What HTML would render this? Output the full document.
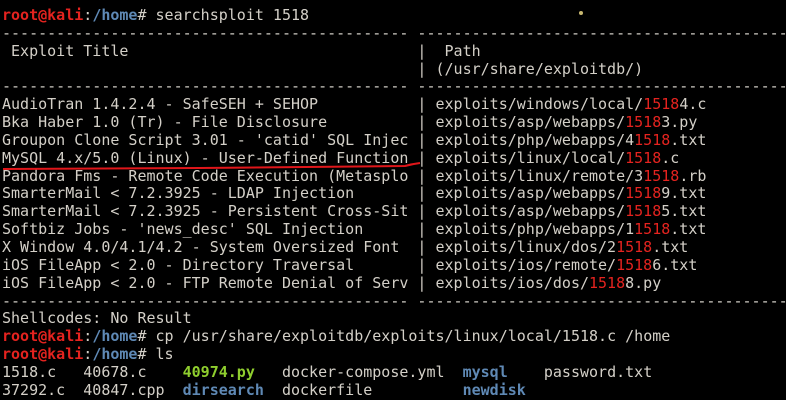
<!DOCTYPE html>
<html><head><meta charset="utf-8"><style>
html,body{margin:0;padding:0;background:#000;width:786px;height:400px;overflow:hidden}
pre{position:absolute;left:2px;top:7px;margin:0;font-family:"DejaVu Sans Mono","Liberation Mono",monospace;font-size:15px;line-height:17.85px;color:#d4d0c8}
.r{color:#e5231f;font-weight:bold}
.b{color:#5f89b5;font-weight:bold}
.h{color:#e5231f}
.g{color:#8fce2e;font-weight:bold}
</style></head><body>
<pre><span class="r">root@kali</span>:<span class="b">/home</span># searchsploit 1518
--------------------------------------------- ------------------------------------------
 Exploit Title                                |  Path
                                              | (/usr/share/exploitdb/)
--------------------------------------------- ------------------------------------------
AudioTran 1.4.2.4 - SafeSEH + SEHOP           | exploits/windows/local/<span class="h">1518</span>4.c
Bka Haber 1.0 (Tr) - File Disclosure          | exploits/asp/webapps/<span class="h">1518</span>3.py
Groupon Clone Script 3.01 - 'catid' SQL Injec | exploits/php/webapps/4<span class="h">1518</span>.txt
MySQL 4.x/5.0 (Linux) - User-Defined Function | exploits/linux/local/<span class="h">1518</span>.c
Pandora Fms - Remote Code Execution (Metasplo | exploits/linux/remote/3<span class="h">1518</span>.rb
SmarterMail &lt; 7.2.3925 - LDAP Injection       | exploits/asp/webapps/<span class="h">1518</span>9.txt
SmarterMail &lt; 7.2.3925 - Persistent Cross-Sit | exploits/asp/webapps/<span class="h">1518</span>5.txt
Softbiz Jobs - 'news_desc' SQL Injection      | exploits/php/webapps/1<span class="h">1518</span>.txt
X Window 4.0/4.1/4.2 - System Oversized Font  | exploits/linux/dos/2<span class="h">1518</span>.txt
iOS FileApp &lt; 2.0 - Directory Traversal       | exploits/ios/remote/<span class="h">1518</span>6.txt
iOS FileApp &lt; 2.0 - FTP Remote Denial of Serv | exploits/ios/dos/<span class="h">1518</span>8.py
--------------------------------------------- ------------------------------------------
Shellcodes: No Result
<span class="r">root@kali</span>:<span class="b">/home</span># cp /usr/share/exploitdb/exploits/linux/local/1518.c /home
<span class="r">root@kali</span>:<span class="b">/home</span># ls
1518.c   40678.c    <span class="g">40974.py</span>   docker-compose.yml  <span class="b">mysql</span>    password.txt
37292.c  40847.cpp  <span class="b">dirsearch</span>  dockerfile          <span class="b">newdisk</span></pre>
<svg width="786" height="400" style="position:absolute;left:0;top:0">
<path d="M3 169 L200 168 L405 166 Q412 164 420 163" stroke="#e0161a" stroke-width="2" fill="none"/>
<circle cx="581" cy="13" r="2" fill="#c8b870"/>
</svg>
</body></html>
